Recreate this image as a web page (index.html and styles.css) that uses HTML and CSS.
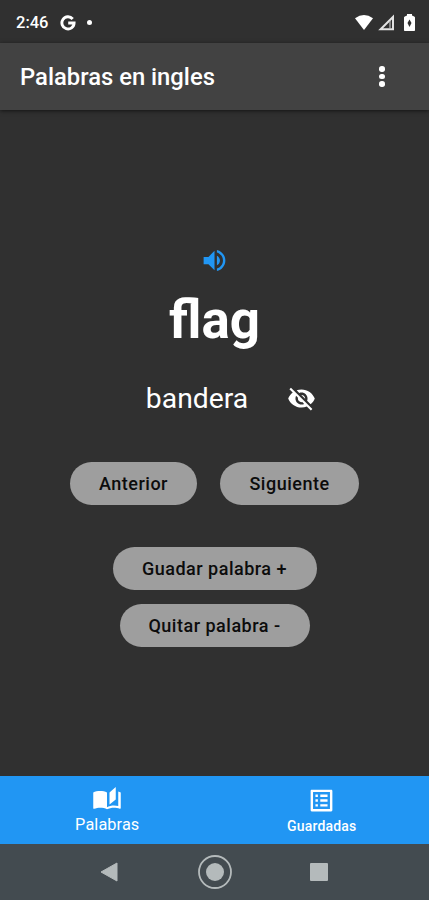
FILE: index.html
```html
<!DOCTYPE html>
<html lang="es">
<head>
<meta charset="utf-8">
<title>Palabras en ingles</title>
<link rel="stylesheet" href="styles.css">
</head>
<body>
<div class="screen">
  <div class="status">
    <span class="time">2:46</span>
    <svg class="google" viewBox="0 0 16 16"><path d="M12.7 4A6.1 6.1 0 1 0 14.1 8H8.2" fill="none" stroke="#fff" stroke-width="2.9"/></svg>
    <span class="dot"></span>
    <span class="signals">
      <svg width="20" height="17" viewBox="0 0 20 17"><path d="M1 4.2Q10-2.3 19 4.2L10 16Z" fill="#fff"/></svg>
      <svg width="17" height="17" viewBox="0 0 17 17"><path d="M15 3V15.2H2.6Z" fill="none" stroke="#e2e2e2" stroke-width="2"/><path d="M12 7v8" stroke="#bbb" stroke-width="1.2"/></svg>
      <svg width="11" height="17" viewBox="0 0 11 17"><path d="M3 0h5v1.5l2.2 1q.8.3.8 1v12.7q0 .8-.8.8H.8q-.8 0-.8-.8V3.5q0-.7.8-1L3 1.500Z" fill="#fff"/><path d="M5.500 5.500 7.500 9 5.500 13 3.500 9Z" fill="#303030"/></svg>
    </span>
  </div>
  <header class="appbar">
    <h1>Palabras en ingles</h1>
    <div class="more"><i></i><i></i><i></i></div>
  </header>
  <main>
    <svg class="speaker" viewBox="0 0 24 24"><path d="M3 9v6h4l5 5V4L7 9H3zm13.500 3c0-1.770-1.020-3.290-2.500-4.030v8.050c1.480-.73 2.500-2.250 2.500-4.020zM14 3.230v2.060c2.890.86 5 3.540 5 6.710s-2.110 5.850-5 6.710v2.060c4.010-.91 7-4.490 7-8.770s-2.990-7.860-7-8.770z"/></svg>
    <div class="word">flag</div>
    <div class="meaning">
      <span>bandera</span>
      <svg class="eye" viewBox="0 0 24 24"><path d="M12 7c2.76 0 5 2.24 5 5 0 .65-.13 1.26-.36 1.83l2.92 2.92c1.51-1.26 2.7-2.89 3.43-4.75-1.73-4.39-6-7.5-11-7.5-1.4 0-2.74.25-3.98.7l2.16 2.16C10.74 7.13 11.35 7 12 7zM2 4.27l2.28 2.28.46.46C3.08 8.3 1.78 10.02 1 12c1.73 4.39 6 7.5 11 7.5 1.55 0 3.03-.3 4.38-.84l.42.42L19.73 22 21 20.73 3.27 3 2 4.27zM7.53 9.8l1.55 1.55c-.05.21-.08.43-.08.65 0 1.66 1.34 3 3 3 .22 0 .44-.03.65-.08l1.55 1.55c-.67.33-1.41.53-2.2.53-2.76 0-5-2.24-5-5 0-.79.2-1.53.53-2.2zm4.31-.78l3.15 3.15.02-.16c0-1.66-1.34-3-3-3l-.17.01z"/></svg>
    </div>
    <div class="pair">
      <button class="prev">Anterior</button>
      <button class="next">Siguiente</button>
    </div>
    <button class="save">Guadar palabra +</button>
    <button class="remove">Quitar palabra -</button>
  </main>
  <nav class="tabs">
    <div class="tab active">
      <svg viewBox="0 0 24 24" preserveAspectRatio="none"><path d="M19 1l-5 5v11l5-4.5V1zM1 6v14.65c0 .25.25.5.5.5.1 0 .15-.05.25-.05C3.1 20.45 5.05 20 6.5 20c1.95 0 4.05.4 5.5 1.5V6c-1.45-1.1-3.55-1.5-5.5-1.5S2.45 4.9 1 6zm22 13.5V6c-.6-.45-1.25-.75-2-1v13.5c-1.1-.35-2.3-.5-3.5-.5-1.7 0-4.15.65-5.5 1.5v2c1.35-.85 3.8-1.5 5.5-1.5 1.65 0 3.35.3 4.75 1.05.1.05.15.05.25.05.25 0 .5-.25.5-.5v-1.1z"/></svg>
      <span>Palabras</span>
    </div>
    <div class="tab">
      <svg viewBox="0 0 24 24"><path d="M19 5v14H5V5h14m1.1-2H3.9c-.5 0-.9.4-.9.9v16.2c0 .4.4.9.9.9h16.2c.4 0 .9-.5.9-.9V3.9c0-.5-.5-.9-.9-.9zM11 7h6v2h-6V7zm0 4h6v2h-6v-2zm0 4h6v2h-6zM7 7h2v2H7zm0 4h2v2H7zm0 4h2v2H7z"/></svg>
      <span>Guardadas</span>
    </div>
  </nav>
  <div class="system">
    <svg width="18" height="20" viewBox="0 0 18 20"><path d="M17 1v18L1 10Z" fill="#b4babb" stroke="#b4babb" stroke-linejoin="round"/></svg>
    <svg width="36" height="36" viewBox="0 0 36 36"><circle cx="18" cy="18" r="16" fill="none" stroke="#b4babb" stroke-width="1.8"/><circle cx="18" cy="18" r="9" fill="#b4babb"/></svg>
    <i class="recent"></i>
  </div>
</div>
</body>
</html>
```
FILE: styles.css
```css
* { box-sizing: border-box; }
body { margin: 0; background: #303030; font-family: Roboto, "Liberation Sans", sans-serif; color: #fff; }
svg { display: block; flex: none; }
.screen { width: 429px; height: 900px; display: flex; flex-direction: column; overflow: hidden; }

.status { height: 43px; flex: none; display: flex; align-items: center; padding: 2px 14px 0 16px; background: #303030; }
.time { width: 33px; font-size: 16.5px; font-weight: 500; white-space: nowrap; }
.google { width: 16px; height: 16px; margin-left: 11px; }
.dot { width: 5px; height: 5px; margin-left: 11px; border-radius: 50%; background: #fff; }
.signals { margin-left: auto; display: flex; align-items: center; }
.signals svg:nth-child(2) { margin: 0 9px 0 4px; }

.appbar { height: 67px; flex: none; display: flex; align-items: center; justify-content: space-between; padding: 0 44px 0 20px; background: #424242; box-shadow: 0 1px 4px rgba(0, 0, 0, .6); }
.appbar h1 { margin: 0; font-size: 23.8px; line-height: 28px; font-weight: 500; white-space: nowrap; }
.more { display: flex; flex-direction: column; gap: 2px; width: 6px; }
.more i { width: 5.5px; height: 5.5px; border-radius: 50%; background: #fff; }

main { flex: 1; display: flex; flex-direction: column; align-items: center; padding-top: 136px; }
.speaker { width: 29px; height: 29px; fill: #2196f3; }
.word { margin-top: 14px; height: 62px; line-height: 62px; font-size: 53px; font-weight: 700; }
.meaning { display: flex; align-items: center; gap: 39px; margin: 30px 0 0 33px; height: 34px; font-size: 28.3px; }
.eye { width: 29px; height: 29px; fill: #fff; }
.pair { display: flex; gap: 23px; margin-top: 47px; }
button { height: 43px; flex: none; padding: 0; border: 0; border-radius: 22px; background: #9e9e9e; color: #0c0c0c; font: 500 18px Roboto, "Liberation Sans", sans-serif; letter-spacing: .5px; white-space: nowrap; }
.prev { width: 127px; }
.next { width: 139px; }
.save { width: 204px; margin-top: 42px; }
.remove { width: 190px; margin-top: 14px; }

.tabs { height: 68px; flex: none; display: grid; grid-template-columns: 1fr 1fr; background: #2196f3; }
.tab { display: flex; flex-direction: column; align-items: center; padding-top: 10px; }
.tab svg { width: 29px; height: 29px; fill: #fff; }
.tab span { margin-top: 2px; font-size: 14px; line-height: 18px; font-weight: 500; letter-spacing: .2px; }
.tab.active svg { width: 30px; height: 26px; }
.tab.active span { margin-top: 3px; font-size: 16.3px; line-height: 20px; font-weight: 400; letter-spacing: .1px; }

.system { height: 56px; flex: none; display: flex; align-items: center; padding-left: 100px; background: #434b50; }
.system svg:nth-child(2) { margin-left: 79px; }
.recent { width: 18px; height: 18px; margin-left: 77px; border-radius: 1px; background: #b4babb; }
```
